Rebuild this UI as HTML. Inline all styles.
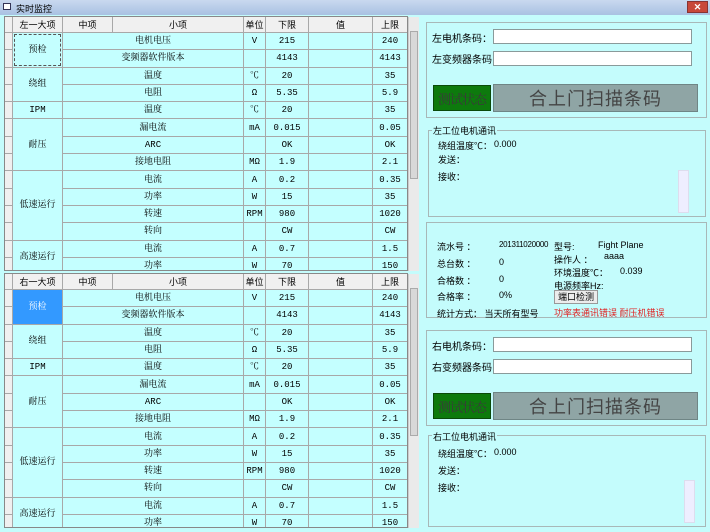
<!DOCTYPE html>
<html><head><meta charset="utf-8"><style>
*{margin:0;padding:0;box-sizing:border-box}
body{width:710px;height:532px;overflow:hidden;background:#c4fcfc;font-family:"Liberation Sans","WenQuanYi Zen Hei",sans-serif;font-size:9px;color:#000;position:relative}
.a{position:absolute;white-space:nowrap}
.title{left:0;top:0;width:710px;height:15px;background:linear-gradient(#c9d9ef,#a9c1e2);}
.grid{position:absolute;left:4px;width:404px;height:255px;display:grid;grid-template-columns:7px 49px 49px 130px 21px 42px 63px 34px;grid-template-rows:15px repeat(14,16.3px);gap:1px;background:#a8a8a8;border:1px solid #888;overflow:hidden;font-family:"Liberation Mono","Noto Serif CJK SC",serif;font-size:9px;line-height:10px}
.grid div{background:#c4ffff;display:flex;align-items:center;justify-content:center;overflow:hidden;min-height:0}
.grid div.h{background:#f0f0f0;font-family:"WenQuanYi Zen Hei",sans-serif}
.grid div.r{background:#f0f0f0}
.sb{position:absolute;left:408px;width:11px;background:#eaeaea;border-left:1px solid #ccc}
.box{position:absolute;border:1px solid #a8b8b8;}
.inp{position:absolute;background:#fff;border:1px solid #8a9a9a;height:15px;width:199px;left:493px}
.gbtn{position:absolute;background:#0d7a0d;color:#3a3a3a;font-size:13px;font-family:"Noto Serif CJK SC",serif;width:58px;height:26px;left:433px;border:1px solid #0a4a0a;display:flex;align-items:center;justify-content:center;letter-spacing:-1px;overflow:hidden}
.pbtn{position:absolute;background:#8fa5a5;color:#444;font-size:18px;font-family:"WenQuanYi Zen Hei",sans-serif;width:205px;height:28px;left:493px;border:1px solid #6f8585;display:flex;align-items:center;justify-content:center;letter-spacing:1px}
.leg{background:#c4fcfc;padding:0 1px}
.vs{position:absolute;width:11px;background:#eef;border:1px solid #dde}
</style></head><body>
<div class="a title"></div>
<div class="a" style="left:3px;top:3px;width:8px;height:7px;border:1px solid #335;background:#fff"></div>
<div class="a" style="left:16px;top:2px;font-size:9px">实时监控</div>
<div class="a" style="left:687px;top:1px;width:21px;height:12px;background:#c8483a;border:1px solid #833;color:#fff;font-size:9px;text-align:center;line-height:10px;font-weight:bold">✕</div>

<div class="grid" style="top:16px">
<div class="h"></div><div class="h">左一大项</div><div class="h">中项</div><div class="h">小项</div><div class="h">单位</div><div class="h">下限</div><div class="h">值</div><div class="h">上限</div>
<div class="r"></div><div style="grid-row:span 2;outline:1px dashed #555;outline-offset:-2px">预检</div><div style="grid-column:span 2">电机电压</div><div>V</div><div>215</div><div></div><div>240</div>
<div class="r"></div><div style="grid-column:span 2">变频器软件版本</div><div></div><div>4143</div><div></div><div>4143</div>
<div class="r"></div><div style="grid-row:span 2">绕组</div><div style="grid-column:span 2">温度</div><div>℃</div><div>20</div><div></div><div>35</div>
<div class="r"></div><div style="grid-column:span 2">电阻</div><div>Ω</div><div>5.35</div><div></div><div>5.9</div>
<div class="r"></div><div>IPM</div><div style="grid-column:span 2">温度</div><div>℃</div><div>20</div><div></div><div>35</div>
<div class="r"></div><div style="grid-row:span 3">耐压</div><div style="grid-column:span 2">漏电流</div><div>mA</div><div>0.015</div><div></div><div>0.05</div>
<div class="r"></div><div style="grid-column:span 2">ARC</div><div></div><div>OK</div><div></div><div>OK</div>
<div class="r"></div><div style="grid-column:span 2">接地电阻</div><div>MΩ</div><div>1.9</div><div></div><div>2.1</div>
<div class="r"></div><div style="grid-row:span 4">低速运行</div><div style="grid-column:span 2">电流</div><div>A</div><div>0.2</div><div></div><div>0.35</div>
<div class="r"></div><div style="grid-column:span 2">功率</div><div>W</div><div>15</div><div></div><div>35</div>
<div class="r"></div><div style="grid-column:span 2">转速</div><div>RPM</div><div>980</div><div></div><div>1020</div>
<div class="r"></div><div style="grid-column:span 2">转向</div><div></div><div>CW</div><div></div><div>CW</div>
<div class="r"></div><div style="grid-row:span 2">高速运行</div><div style="grid-column:span 2">电流</div><div>A</div><div>0.7</div><div></div><div>1.5</div>
<div class="r"></div><div style="grid-column:span 2">功率</div><div>W</div><div>70</div><div></div><div>150</div>
</div>
<div class="sb" style="top:17px;height:254px"><div style="position:absolute;left:1px;top:14px;width:8px;height:148px;background:#d8d8d8;border:1px solid #aaa"></div></div>

<div class="grid" style="top:273px">
<div class="h"></div><div class="h">右一大项</div><div class="h">中项</div><div class="h">小项</div><div class="h">单位</div><div class="h">下限</div><div class="h">值</div><div class="h">上限</div>
<div class="r"></div><div style="grid-row:span 2;background:#3399ff;color:#fff">预检</div><div style="grid-column:span 2">电机电压</div><div>V</div><div>215</div><div></div><div>240</div>
<div class="r"></div><div style="grid-column:span 2">变频器软件版本</div><div></div><div>4143</div><div></div><div>4143</div>
<div class="r"></div><div style="grid-row:span 2">绕组</div><div style="grid-column:span 2">温度</div><div>℃</div><div>20</div><div></div><div>35</div>
<div class="r"></div><div style="grid-column:span 2">电阻</div><div>Ω</div><div>5.35</div><div></div><div>5.9</div>
<div class="r"></div><div>IPM</div><div style="grid-column:span 2">温度</div><div>℃</div><div>20</div><div></div><div>35</div>
<div class="r"></div><div style="grid-row:span 3">耐压</div><div style="grid-column:span 2">漏电流</div><div>mA</div><div>0.015</div><div></div><div>0.05</div>
<div class="r"></div><div style="grid-column:span 2">ARC</div><div></div><div>OK</div><div></div><div>OK</div>
<div class="r"></div><div style="grid-column:span 2">接地电阻</div><div>MΩ</div><div>1.9</div><div></div><div>2.1</div>
<div class="r"></div><div style="grid-row:span 4">低速运行</div><div style="grid-column:span 2">电流</div><div>A</div><div>0.2</div><div></div><div>0.35</div>
<div class="r"></div><div style="grid-column:span 2">功率</div><div>W</div><div>15</div><div></div><div>35</div>
<div class="r"></div><div style="grid-column:span 2">转速</div><div>RPM</div><div>980</div><div></div><div>1020</div>
<div class="r"></div><div style="grid-column:span 2">转向</div><div></div><div>CW</div><div></div><div>CW</div>
<div class="r"></div><div style="grid-row:span 2">高速运行</div><div style="grid-column:span 2">电流</div><div>A</div><div>0.7</div><div></div><div>1.5</div>
<div class="r"></div><div style="grid-column:span 2">功率</div><div>W</div><div>70</div><div></div><div>150</div>
</div>
<div class="sb" style="top:274px;height:254px"><div style="position:absolute;left:1px;top:14px;width:8px;height:148px;background:#d8d8d8;border:1px solid #aaa"></div></div>

<!-- right panel -->
<div class="box" style="left:426px;top:22px;width:281px;height:96px"></div>
<div class="a" style="left:432px;top:30px;font-size:10px">左电机条码：</div><div class="inp" style="top:29px"></div>
<div class="a" style="left:432px;top:51px;font-size:10px">左变频器条码</div><div class="inp" style="top:51px"></div>
<div class="gbtn" style="top:85px">测试状态</div><div class="pbtn" style="top:84px">合上门扫描条码</div>

<div class="box" style="left:428px;top:130px;width:278px;height:87px"></div>
<div class="a leg" style="left:432px;top:124px">左工位电机通讯</div>
<div class="a" style="left:438px;top:139px">绕组温度℃：</div><div class="a" style="left:494px;top:139px">0.000</div>
<div class="a" style="left:438px;top:153px">发送：</div>
<div class="a" style="left:438px;top:170px">接收：</div>
<div class="vs" style="left:678px;top:170px;height:43px"></div>

<div class="box" style="left:426px;top:222px;width:281px;height:96px"></div>
<div class="a" style="left:437px;top:240px">流水号 ：</div><div class="a" style="left:499px;top:240px;font-size:8px;letter-spacing:-0.3px">201311020000</div>
<div class="a" style="left:437px;top:257px">总台数 ：</div><div class="a" style="left:499px;top:257px">0</div>
<div class="a" style="left:437px;top:274px">合格数 ：</div><div class="a" style="left:499px;top:274px">0</div>
<div class="a" style="left:437px;top:290px">合格率 ：</div><div class="a" style="left:499px;top:290px">0%</div>
<div class="a" style="left:437px;top:307px">统计方式： 当天所有型号</div>
<div class="a" style="left:554px;top:240px">型号:</div><div class="a" style="left:598px;top:240px">Fight Plane</div>
<div class="a" style="left:554px;top:253px">操作人 ：</div><div class="a" style="left:604px;top:251px">aaaa</div>
<div class="a" style="left:554px;top:266px">环境温度℃：</div><div class="a" style="left:620px;top:266px">0.039</div>
<div class="a" style="left:554px;top:279px">电源频率Hz:</div>
<div class="a" style="left:554px;top:290px;width:44px;height:14px;background:#ececec;border:1px solid #999;text-align:center;line-height:12px">端口检测</div>
<div class="a" style="left:554px;top:306px;color:#e02020">功率表通讯错误 耐压机错误</div>

<div class="box" style="left:426px;top:330px;width:281px;height:96px"></div>
<div class="a" style="left:432px;top:338px;font-size:10px">右电机条码：</div><div class="inp" style="top:337px"></div>
<div class="a" style="left:432px;top:359px;font-size:10px">右变频器条码</div><div class="inp" style="top:359px"></div>
<div class="gbtn" style="top:393px">测试状态</div><div class="pbtn" style="top:392px">合上门扫描条码</div>

<div class="box" style="left:428px;top:435px;width:278px;height:92px"></div>
<div class="a leg" style="left:432px;top:430px">右工位电机通讯</div>
<div class="a" style="left:438px;top:447px">绕组温度℃：</div><div class="a" style="left:494px;top:447px">0.000</div>
<div class="a" style="left:438px;top:464px">发送：</div>
<div class="a" style="left:438px;top:481px">接收：</div>
<div class="vs" style="left:684px;top:480px;height:43px"></div>
</body></html>
